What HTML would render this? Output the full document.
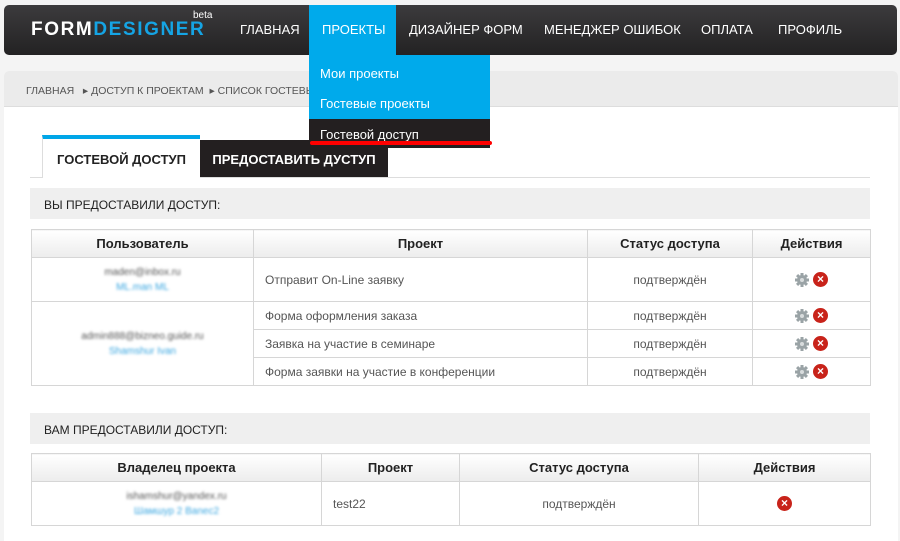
<!DOCTYPE html>
<html><head><meta charset="utf-8"><style>
*{margin:0;padding:0;box-sizing:border-box}
body{width:900px;height:532px;overflow:hidden;background:#f4f4f4;font-family:"Liberation Sans",Arial,sans-serif;position:relative}
.a{position:absolute}
.nav{left:4px;top:5px;width:893px;height:50px;border-radius:5px;background:linear-gradient(#3c3b3d,#232223)}
.nt{position:absolute;top:22px;color:#fff;font-size:13px;white-space:nowrap}
.logo{left:31px;top:19px;font-size:19px;font-weight:bold;letter-spacing:1.6px;color:#fff;font-family:"Liberation Sans",sans-serif}
.panel{left:4px;top:71px;width:894px;height:470px;background:#fff;border-radius:5px 5px 0 0}
.bc{left:4px;top:71px;width:894px;height:36px;background:#ebebeb;border-radius:5px 5px 0 0;border-bottom:1px solid #ddd;font-size:10.5px;color:#555;padding:14px 0 0 22px}
.dd{left:309px;top:55px;width:181px;height:93px;background:#00aaeb}
.dd div{position:absolute;left:11px;color:#fff;font-size:13px}
table{position:absolute;border-collapse:collapse;font-size:12px;color:#555}
td,th{border:1px solid #d6d6d6;text-align:center}
th{background:linear-gradient(#fff,#ececec);color:#222;font-size:13px;height:28px}
.sec{left:30px;width:840px;height:31px;background:#efefef;font-size:12px;color:#222;padding:10px 0 0 14px}
.bl{filter:blur(1.3px);font-size:10px;line-height:15px}
.g{display:inline-block;vertical-align:middle;margin-right:4px}
.x{display:inline-block;width:15px;height:15px;border-radius:50%;background:#c8231a;color:#fff;font-size:12px;line-height:15px;font-weight:bold;vertical-align:middle;text-align:center}
.l{text-align:left;padding-left:11px}
</style></head><body>
<div class="a nav"></div>
<div class="a" style="left:309px;top:5px;width:87px;height:50px;background:#00aaeb"></div>
<div class="a logo">FORM<span style="color:#15a4e4">DESIGNER</span></div>
<div class="a" style="left:193px;top:10px;color:#fff;font-size:10px">beta</div>
<span class="nt" style="left:240px">ГЛАВНАЯ</span>
<span class="nt" style="left:322px">ПРОЕКТЫ</span>
<span class="nt" style="left:409px">ДИЗАЙНЕР ФОРМ</span>
<span class="nt" style="left:544px">МЕНЕДЖЕР ОШИБОК</span>
<span class="nt" style="left:701px">ОПЛАТА</span>
<span class="nt" style="left:778px">ПРОФИЛЬ</span>
<div class="a panel"></div>
<div class="a bc">ГЛАВНАЯ &nbsp; ▸ ДОСТУП К ПРОЕКТАМ &nbsp;▸ СПИСОК ГОСТЕВЫХ ПРОЕКТОВ</div>
<div class="a" style="left:30px;top:177px;width:840px;height:1px;background:#ddd"></div>
<div class="a" style="left:42px;top:135px;width:158px;height:43px;background:#fff;border-top:4px solid #00a6e8;border-left:1px solid #ddd;font-size:13px;font-weight:bold;color:#222;text-align:center;padding-top:13px">ГОСТЕВОЙ ДОСТУП</div>
<div class="a" style="left:200px;top:140px;width:188px;height:37px;background:#231f20;font-size:13px;font-weight:bold;color:#fff;text-align:center;padding-top:12px">ПРЕДОСТАВИТЬ ДУСТУП</div>
<div class="a sec" style="top:188px">ВЫ ПРЕДОСТАВИЛИ ДОСТУП:</div>
<table style="left:31px;top:229px;width:840px">
<tr><th style="width:222px">Пользователь</th><th style="width:334px">Проект</th><th style="width:165px">Статус доступа</th><th>Действия</th></tr>
<tr style="height:44px"><td><div class="bl">maden@inbox.ru<br><span style="color:#3aa6e0">ML.man ML</span></div></td><td class="l">Отправит On-Line заявку</td><td>подтверждён</td><td><svg class="g" width="14" height="14" viewBox="0 0 14 14"><g fill="#9aa3a6"><circle cx="7" cy="7" r="5"/><rect x="5.5" y="0" width="3" height="14"/><rect x="0" y="5.5" width="14" height="3"/><rect x="5.5" y="0" width="3" height="14" transform="rotate(45 7 7)"/><rect x="5.5" y="0" width="3" height="14" transform="rotate(-45 7 7)"/></g><circle cx="7" cy="7" r="2" fill="#d8dcdd"/></svg><span class="x">×</span></td></tr>
<tr style="height:28px"><td rowspan="3"><div class="bl">admin888@bizneo.guide.ru<br><span style="color:#3aa6e0">Shamshur Ivan</span></div></td><td class="l">Форма оформления заказа</td><td>подтверждён</td><td><svg class="g" width="14" height="14" viewBox="0 0 14 14"><g fill="#9aa3a6"><circle cx="7" cy="7" r="5"/><rect x="5.5" y="0" width="3" height="14"/><rect x="0" y="5.5" width="14" height="3"/><rect x="5.5" y="0" width="3" height="14" transform="rotate(45 7 7)"/><rect x="5.5" y="0" width="3" height="14" transform="rotate(-45 7 7)"/></g><circle cx="7" cy="7" r="2" fill="#d8dcdd"/></svg><span class="x">×</span></td></tr>
<tr style="height:28px"><td class="l">Заявка на участие в семинаре</td><td>подтверждён</td><td><svg class="g" width="14" height="14" viewBox="0 0 14 14"><g fill="#9aa3a6"><circle cx="7" cy="7" r="5"/><rect x="5.5" y="0" width="3" height="14"/><rect x="0" y="5.5" width="14" height="3"/><rect x="5.5" y="0" width="3" height="14" transform="rotate(45 7 7)"/><rect x="5.5" y="0" width="3" height="14" transform="rotate(-45 7 7)"/></g><circle cx="7" cy="7" r="2" fill="#d8dcdd"/></svg><span class="x">×</span></td></tr>
<tr style="height:28px"><td class="l">Форма заявки на участие в конференции</td><td>подтверждён</td><td><svg class="g" width="14" height="14" viewBox="0 0 14 14"><g fill="#9aa3a6"><circle cx="7" cy="7" r="5"/><rect x="5.5" y="0" width="3" height="14"/><rect x="0" y="5.5" width="14" height="3"/><rect x="5.5" y="0" width="3" height="14" transform="rotate(45 7 7)"/><rect x="5.5" y="0" width="3" height="14" transform="rotate(-45 7 7)"/></g><circle cx="7" cy="7" r="2" fill="#d8dcdd"/></svg><span class="x">×</span></td></tr>
</table>
<div class="a sec" style="top:413px">ВАМ ПРЕДОСТАВИЛИ ДОСТУП:</div>
<table style="left:31px;top:453px;width:840px">
<tr><th style="width:290px">Владелец проекта</th><th style="width:138px">Проект</th><th style="width:239px">Статус доступа</th><th>Действия</th></tr>
<tr style="height:44px"><td><div class="bl">ishamshur@yandex.ru<br><span style="color:#3aa6e0">Шамшур 2 Ваnес2</span></div></td><td class="l">test22</td><td>подтверждён</td><td><span class="x">×</span></td></tr>
</table>
<div class="a dd">
<div style="top:11px">Мои проекты</div>
<div style="top:41px">Гостевые проекты</div>
<div style="top:64px;left:0;width:181px;height:29px;background:#231f20"></div>
<div style="top:72px">Гостевой доступ</div>
</div>
<div class="a" style="left:310px;top:141px;width:182px;height:4px;background:#f00;border-radius:2px"></div>
</body></html>
